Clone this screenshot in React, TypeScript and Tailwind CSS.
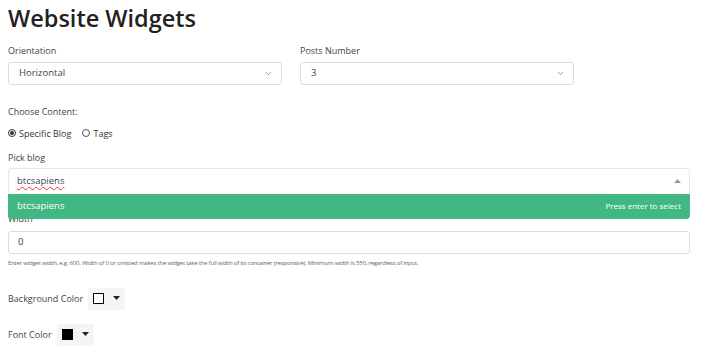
import { ChevronDown } from "lucide-react"

function Label({ children }: { children: React.ReactNode }) {
  return <div className="text-[9px] text-[#444] leading-none">{children}</div>
}

function Select({ value }: { value: string }) {
  return (
    <div className="mt-[7px] h-[23px] w-[274px] rounded-[3px] border border-[#dcdcdc] bg-white flex items-center justify-between pl-[10px] pr-[8px]">
      <span className="text-[9.5px] text-[#444]">{value}</span>
      <ChevronDown className="w-[9px] h-[9px] text-[#777]" strokeWidth={2} />
    </div>
  )
}

function ColorPicker({ color }: { color: string }) {
  return (
    <div className="flex items-center gap-[9px] h-[22px] px-[5px] bg-[#f5f5f5]">
      <div className="w-[11px] h-[11px] border border-black" style={{ background: color }} />
      <svg width="7" height="5" viewBox="0 0 7 5">
        <path d="M0 0 L7 0 L3.5 4 Z" fill="#222" />
      </svg>
    </div>
  )
}

export default function App() {
  return (
    <div className="w-[710px] h-[357px] overflow-hidden bg-white px-[8px] text-[#333]" style={{ fontFamily: "'Open Sans', 'Noto Sans', sans-serif" }}>
      <h1 className="text-[23.5px] font-semibold text-[#222] leading-none pt-[7px]">Website Widgets</h1>

      <div className="flex gap-[18px] mt-[15px]">
        <div>
          <Label>Orientation</Label>
          <Select value="Horizontal" />
        </div>
        <div>
          <Label>Posts Number</Label>
          <Select value="3" />
        </div>
      </div>

      <div className="mt-[22px]">
        <Label>Choose Content:</Label>
      </div>

      <div className="mt-[13px] flex items-center text-[9px] text-[#333] leading-none">
        <span className="w-[8px] h-[8px] rounded-full border border-[#333] flex items-center justify-center">
          <span className="w-[4px] h-[4px] rounded-full bg-[#333]" />
        </span>
        <span className="ml-[3px]">Specific Blog</span>
        <span className="ml-[11px] w-[8px] h-[8px] rounded-full border border-[#555]" />
        <span className="ml-[3px]">Tags</span>
      </div>

      <div className="mt-[15px]">
        <Label>Pick blog</Label>
      </div>

      <div className="relative mt-[6px]">
        <div className="h-[26px] w-[682px] rounded-t-[4px] border border-b-0 border-[#e8e8e8] bg-white flex items-center justify-between pl-[8px] pr-[8px]">
          <span className="text-[9.5px] text-[#35495e] underline decoration-wavy decoration-[#e33] decoration-[1px] underline-offset-[2px]">btcsapiens</span>
          <svg width="7" height="4" viewBox="0 0 7 4">
            <path d="M0 4 L7 4 L3.5 0 Z" fill="#999" />
          </svg>
        </div>
        <div className="absolute left-0 top-[26px] z-10 w-[682px] h-[25px] rounded-b-[4px] bg-[#41b883] flex items-center justify-between px-[9px] text-white">
          <span className="text-[9.5px]">btcsapiens</span>
          <span className="text-[8px]">Press enter to select</span>
        </div>
        <div className="pt-[20px]">
          <div className="text-[9px] text-[#444] leading-none">Width</div>
        </div>
      </div>

      <div className="mt-[8px] h-[23px] w-[682px] rounded-[3px] border border-[#dcdcdc] bg-white flex items-center pl-[9px]">
        <span className="text-[9.5px] text-[#444]">0</span>
      </div>
      <div className="mt-[6px] text-[6.1px] text-[#666] leading-none tracking-[-0.25px]">
        Enter widget width, e.g. 600. Width of 0 or omitted makes the widget take the full width of its container (responsive). Minimum width is 550, regardless of input.
      </div>

      <div className="mt-[22px] flex items-center gap-[5px]">
        <span className="text-[9px] text-[#444]">Background Color</span>
        <ColorPicker color="#ffffff" />
      </div>
      <div className="mt-[14px] flex items-center gap-[5px]">
        <span className="text-[9px] text-[#444]">Font Color</span>
        <ColorPicker color="#000000" />
      </div>
    </div>
  )
}
